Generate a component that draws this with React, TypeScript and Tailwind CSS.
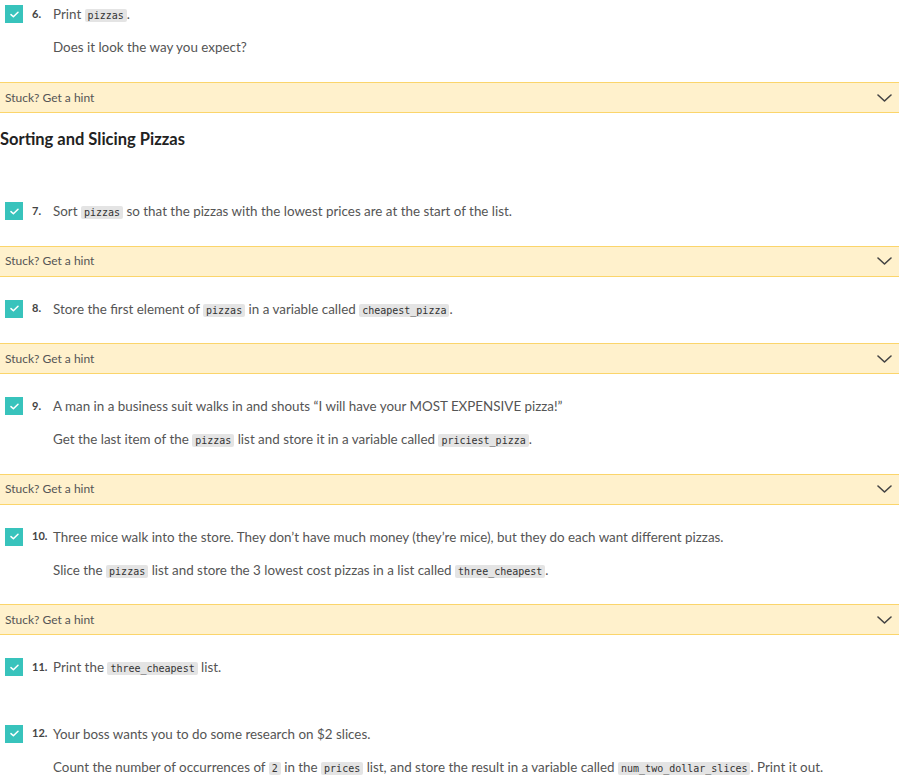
import React from 'react'

const font = { fontFamily: 'Lato, "Open Sans", sans-serif' }

function Code({ children }: { children: React.ReactNode }) {
  return (
    <code className="bg-[#e4e4e4] text-[#333] px-[3px] py-[1px] rounded-[2px] text-[10px] leading-none font-['DejaVu_Sans_Mono',monospace]">
      {children}
    </code>
  )
}

function Check() {
  return (
    <div className="w-[18px] h-[18px] bg-[#38c3bc] flex items-center justify-center shrink-0">
      <svg width="9" height="7" viewBox="0 0 9 7" fill="none">
        <path d="M1 3.6 L3.4 5.8 L8 1.2" stroke="white" strokeWidth="1.5" strokeLinecap="round" strokeLinejoin="round" />
      </svg>
    </div>
  )
}

interface StepProps {
  num: number
  lines: React.ReactNode[]
  first?: boolean
}

function Step({ num, lines, first }: StepProps) {
  return (
    <div className={`flex items-start pl-[5px] ${first ? 'pt-[4px] pb-[25px]' : 'pt-[22px] pb-[24.5px]'}`}>
      <div className="h-5 flex items-center">
        <Check />
      </div>
      <div className="ml-[9px] w-[21px] shrink-0 h-5 flex items-center text-[11px] font-bold text-[#444]">{num}.</div>
      <div className="flex flex-col gap-[13px] text-[13.4px] leading-5 text-[#555]">
        {lines.map((line, i) => (
          <p key={i} className="h-5">{line}</p>
        ))}
      </div>
    </div>
  )
}

function Hint() {
  return (
    <div className="flex items-center justify-between h-[31px] bg-[#fff1cc] border-y border-[#fbd56b] pl-[5px] pr-[7px]">
      <span className="text-[12px] text-[#555]">Stuck? Get a hint</span>
      <svg width="15" height="8" viewBox="0 0 15 8" fill="none">
        <path d="M1 1 L7.5 7 L14 1" stroke="#444" strokeWidth="1.6" strokeLinecap="round" strokeLinejoin="round" />
      </svg>
    </div>
  )
}

export default function App() {
  return (
    <div className="w-[899px] h-[784px] bg-white overflow-hidden" style={font}>
      <Step first num={6} lines={[<>Print <Code>pizzas</Code>.</>, 'Does it look the way you expect?']} />
      <Hint />

      {/* Section heading */}
      <h2 className="pt-[14px] pb-[28px] text-[16.5px] leading-6 font-bold text-[#222]">Sorting and Slicing Pizzas</h2>

      <Step
        num={7}
        lines={[<>Sort <Code>pizzas</Code> so that the pizzas with the lowest prices are at the start of the list.</>]}
      />
      <Hint />
      <Step
        num={8}
        lines={[<>Store the first element of <Code>pizzas</Code> in a variable called <Code>cheapest_pizza</Code>.</>]}
      />
      <Hint />
      <Step
        num={9}
        lines={[
          <>A man in a business suit walks in and shouts “I will have your MOST EXPENSIVE pizza!”</>,
          <>Get the last item of the <Code>pizzas</Code> list and store it in a variable called <Code>priciest_pizza</Code>.</>,
        ]}
      />
      <Hint />
      <Step
        num={10}
        lines={[
          <>Three mice walk into the store. They don’t have much money (they’re mice), but they do each want different pizzas.</>,
          <>Slice the <Code>pizzas</Code> list and store the 3 lowest cost pizzas in a list called <Code>three_cheapest</Code>.</>,
        ]}
      />
      <Hint />
      <Step num={11} lines={[<>Print the <Code>three_cheapest</Code> list.</>]} />
      <Step
        num={12}
        lines={[
          'Your boss wants you to do some research on $2 slices.',
          <>
            Count the number of occurrences of <Code>2</Code> in the <Code>prices</Code> list, and store the result in a variable called <Code>num_two_dollar_slices</Code>. Print it out.
          </>,
        ]}
      />
    </div>
  )
}
